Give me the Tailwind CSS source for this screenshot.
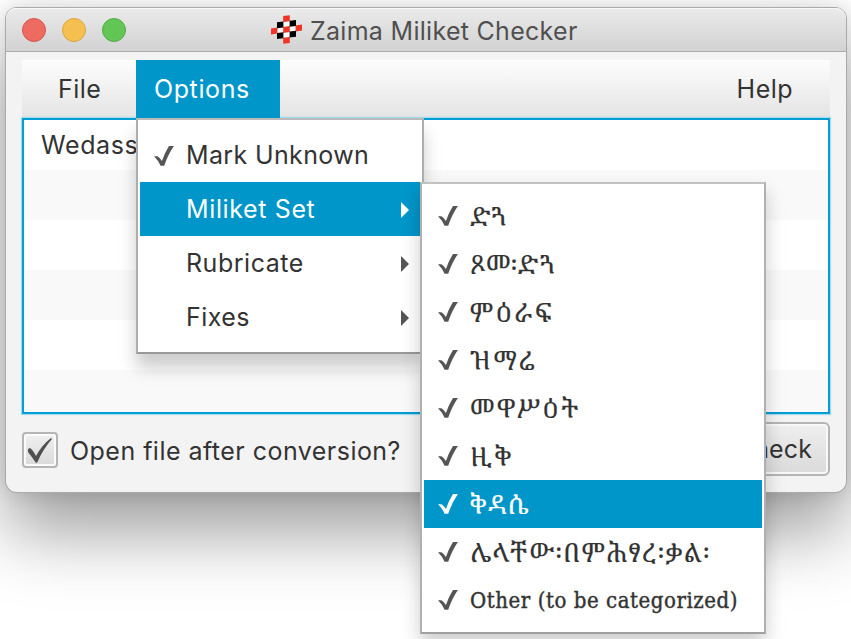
<!DOCTYPE html>
<html lang="en">
<head>
<meta charset="utf-8">
<title>Zaima Miliket Checker</title>
<script src="https://cdn.jsdelivr.net/npm/@tailwindcss/browser@4"></script>
</head>
<body class="relative w-[851px] h-[639px] overflow-hidden bg-white font-[Inter,'Open_Sans',sans-serif] text-[25px] leading-none tracking-[0.47px] text-[#333]">
<svg class="hidden">
  <symbol id="check" viewBox="0 0 20 20"><path d="M0 10.200H3.400Q5.600 11.500 7.900 15Q10.500 7 15 0H19.900Q14 8.500 10.200 19.800H6.600Q4 14 0 10.200Z" fill="currentColor"/></symbol>
  <symbol id="arrow" viewBox="0 0 8 16"><path d="M0 0 8 8 0 16Z" fill="currentColor"/></symbol>
</svg>

<main class="absolute left-[6px] top-[8px] w-[840px] h-[484px] rounded-[11px] bg-[#f3f3f3] shadow-[0_0_0_1px_#aaa,0_40px_70px_rgba(0,0,0,0.38),0_0_20px_rgba(0,0,0,0.14)]">
  <header class="h-[44px] rounded-t-[10px] border-b border-[#acacac] bg-linear-to-b from-[#ebebeb] to-[#d2d2d2] shadow-[inset_0_1px_0_#f7f7f7] flex items-center">
    <div class="flex gap-4 pl-4">
      <i class="size-6 rounded-full bg-[#ed6b60] border border-[#d5584e]"></i>
      <i class="size-6 rounded-full bg-[#f5c04f] border border-[#dba63f]"></i>
      <i class="size-6 rounded-full bg-[#62c655] border border-[#51ad46]"></i>
    </div>
    <svg class="ml-[145px] w-[31px] h-[29px] shrink-0" viewBox="-15.5 -14.500 31 29">
      <g transform="skewY(-7)">
        <path fill="#fff" d="M-9.300-8.100H9.300V8.100H-9.300Z"/>
        <path fill="#f03426" d="M-3.300-13.800h6.600v6h-6.600ZM-15.500-3h6.400v6h-6.400ZM-3.300-3h6.600v6h-6.600ZM9.100-3h6.400v6h-6.400ZM-3.300 7.800h6.600v6h-6.600Z"/>
        <path fill="#000" d="M-9.500-8.400h6.400v6h-6.400ZM3.100-8.400h6.400v6h-6.400ZM-9.500 2.400h6.400v6h-6.400ZM3.100 2.400h6.400v6h-6.400Z"/>
      </g>
    </svg>
    <h1 class="ml-[8px] pt-[3px] text-[#505050] whitespace-nowrap tracking-[0.29px]">Zaima Miliket Checker</h1>
  </header>

  <div class="px-4 pt-[8px]">
    <nav class="h-[58px] flex items-stretch bg-linear-to-b from-[#fdfdfd] to-[#e4e4e4] shadow-[inset_0_-1px_0_#8fb4c0]">
      <div class="w-[114px] pl-[36px] flex items-center">File</div>
      <div class="w-[144px] pl-[18px] flex items-center bg-[#0096c9] text-white tracking-[0.6px]">Options</div>
      <div class="ml-auto pr-[37px] flex items-center">Help</div>
    </nav>
    <section class="h-[296px] border-2 border-[#039ed3] bg-white shadow-[0_0_1px_1px_#a5dcee] flex flex-col">
      <div class="h-[50px] pl-[17px] flex items-center tracking-[0.6px]">Wedass</div>
      <div class="h-[50px] bg-[#f9f9f9]"></div>
      <div class="h-[50px]"></div>
      <div class="h-[50px] bg-[#f9f9f9]"></div>
      <div class="h-[50px]"></div>
      <div class="flex-1 bg-[#f9f9f9]"></div>
    </section>
    <footer class="flex items-start justify-between pt-[8px]">
      <div class="flex items-center pt-[10px]">
        <div class="size-[36px] rounded-[4px] border-2 border-[#b5b5b5] bg-linear-to-b from-[#f0f0f0] to-[#dadada] shadow-[inset_0_0_0_2px_#fbfbfb] flex items-center justify-center text-[#505050]">
          <svg class="w-[24px] h-[25px]" viewBox="0 0 24 25"><path d="M0 11 2 10Q5 12 8 18 14 7 23 0L24 1Q15 11 9.500 24L8 25Q4 19 0 14Z" fill="currentColor"/></svg>
        </div>
        <span class="ml-[12px] pt-[2px] whitespace-nowrap">Open file after conversion?</span>
      </div>
      <div class="w-[132px] h-[54px] rounded-[6px] border-2 border-[#b5b5b5] bg-linear-to-b from-[#efefef] to-[#dadada] shadow-[inset_0_0_0_2px_#f8f8f8] flex items-center justify-end pr-[16px] tracking-[0.1px]">Check</div>
    </footer>
  </div>
</main>

<div class="absolute left-[136px] top-[118px] w-[288px] h-[236px] border-2 border-t-[#bababa] border-x-[#adadad] border-b-[#999] bg-white pt-2 px-[2px] shadow-[0_14px_16px_rgba(0,0,0,0.2)]">
  <div class="h-[54px] flex items-center pl-[14px]"><svg class="mt-[2px] size-5 text-[#555]"><use href="#check"/></svg><span class="ml-[12px] whitespace-nowrap tracking-[0.36px]">Mark Unknown</span></div>
  <div class="h-[54px] flex items-center justify-between pl-[46px] pr-[11px] bg-[#0096c9] text-white"><span class="tracking-[0.63px]">Miliket Set</span><svg class="mt-[2px] w-2 h-4"><use href="#arrow"/></svg></div>
  <div class="h-[54px] flex items-center justify-between pl-[46px] pr-[11px]"><span class="tracking-[0.53px]">Rubricate</span><svg class="mt-[2px] w-2 h-4 text-[#555]"><use href="#arrow"/></svg></div>
  <div class="h-[54px] flex items-center justify-between pl-[46px] pr-[11px]"><span>Fixes</span><svg class="mt-[2px] w-2 h-4 text-[#555]"><use href="#arrow"/></svg></div>
</div>

<div class="absolute left-[420px] top-[182px] w-[346px] h-[452px] border-2 border-t-[#c2c2c2] border-x-[#b0b0b0] border-b-[#a0a0a0] bg-white pt-2 px-[2px] shadow-[0_10px_18px_rgba(0,0,0,0.2)] font-['Noto_Serif_Ethiopic','Noto_Sans_Ethiopic','DejaVu_Serif',serif] text-[26px] [-webkit-text-stroke:0.15px_currentColor]">
  <div class="h-12 flex items-center pl-[14px] gap-[12px] whitespace-nowrap"><svg class="size-5 text-[#555]"><use href="#check"/></svg><span class="tracking-[-0.500px]">ድጓ</span></div>
  <div class="h-12 flex items-center pl-[14px] gap-[12px] whitespace-nowrap"><svg class="size-5 text-[#555]"><use href="#check"/></svg><span class="tracking-[0.200px]">ጾመ፡ድጓ</span></div>
  <div class="h-12 flex items-center pl-[14px] gap-[12px] whitespace-nowrap"><svg class="size-5 text-[#555]"><use href="#check"/></svg><span class="tracking-[2.500px]">ምዕራፍ</span></div>
  <div class="h-12 flex items-center pl-[14px] gap-[12px] whitespace-nowrap"><svg class="size-5 text-[#555]"><use href="#check"/></svg><span class="tracking-[3px]">ዝማሬ</span></div>
  <div class="h-12 flex items-center pl-[14px] gap-[12px] whitespace-nowrap"><svg class="size-5 text-[#555]"><use href="#check"/></svg><span class="tracking-[1.500px]">መዋሥዕት</span></div>
  <div class="h-12 flex items-center pl-[14px] gap-[12px] whitespace-nowrap"><svg class="size-5 text-[#555]"><use href="#check"/></svg><span class="tracking-[4px]">ዚቅ</span></div>
  <div class="h-12 flex items-center pl-[14px] gap-[12px] whitespace-nowrap bg-[#0096c9] text-white"><svg class="size-5"><use href="#check"/></svg><span class="tracking-[1.200px]">ቅዳሴ</span></div>
  <div class="h-12 flex items-center pl-[14px] gap-[12px] whitespace-nowrap"><svg class="size-5 text-[#555]"><use href="#check"/></svg><span class="tracking-[1.100px]">ሌላቸው፡በምሕፃረ፡ቃል፡</span></div>
  <div class="h-12 flex items-center pl-[14px] gap-[12px] whitespace-nowrap"><svg class="size-5 text-[#555]"><use href="#check"/></svg><span class="pt-[2px] font-['DejaVu_Serif_Condensed','DejaVu_Serif',serif] text-[22px] tracking-[0.55px] [-webkit-text-stroke:0.4px_currentColor]">Other (to be categorized)</span></div>
</div>
</body>
</html>
